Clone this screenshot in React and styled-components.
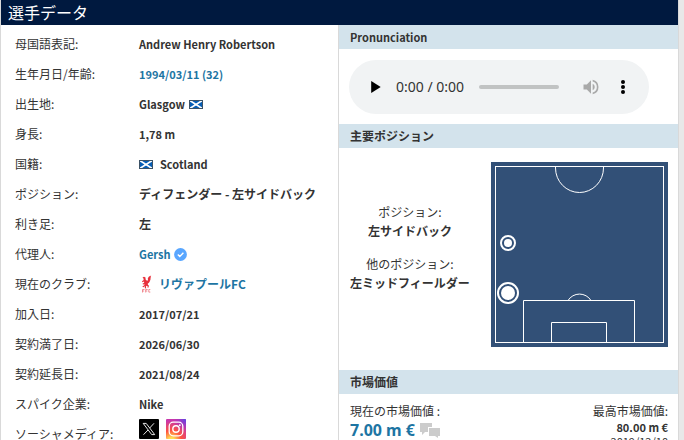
import React from "react";
import styled, { createGlobalStyle, css } from "styled-components";

const GlobalStyle = createGlobalStyle`
  *, *::before, *::after { box-sizing: border-box; }
  body {
    margin: 0;
    background: #e8e8e8;
    color: #333;
    font: 12px/18px "Noto Sans CJK JP", sans-serif;
  }
  h2, h3, p, dl, dd, dt { margin: 0; }
  a { color: #1d75a3; text-decoration: none; }
`;

const Page = styled.div`
  height: 100vh;
  overflow: hidden;
  padding-right: 5px;
`;

const Card = styled.section`
  background: #fff;
  border: solid #d9d9d9;
  border-width: 0 1px;
  min-height: 100%;
`;

const CardTitle = styled.h2`
  height: 25px;
  padding-left: 7px;
  background: #00193f;
  color: #fff;
  font-size: 16px;
  font-weight: 400;
  line-height: 24px;
`;

const Columns = styled.div`
  display: grid;
  grid-template-columns: minmax(0, 337fr) minmax(0, 340fr);
`;

const Facts = styled.dl`
  padding: 4px 0 0 14px;
`;

const Fact = styled.div`
  display: grid;
  grid-template-columns: 124px 1fr;
  align-items: center;
  height: 30px;
  white-space: nowrap;
`;

const FactValue = styled.dd`
  display: flex;
  align-items: center;
  align-self: ${(p) => (p.$top ? "start" : "center")};
  gap: ${(p) => p.$gap || 4}px;
  font-size: ${(p) => (p.$latin ? 11 : 12)}px;
  font-weight: 700;
`;

const Side = styled.div`
  border-left: 1px solid #d9d9d9;
  min-width: 0;
`;

const BoxTitle = styled.h3`
  height: 24px;
  padding-left: 11px;
  background: #d3e3ec;
  font-size: ${(p) => (p.$latin ? 11 : 12)}px;
  font-weight: 700;
  line-height: 24px;
`;

const Player = styled.div`
  display: flex;
  align-items: center;
  width: 300px;
  max-width: 100%;
  height: 54px;
  margin: 11px 10px 10px;
  padding: 0 10px;
  border-radius: 27px;
  background: #f1f3f4;
`;

const PlayerButton = styled.button`
  display: flex;
  align-items: center;
  justify-content: center;
  width: 32px;
  height: 32px;
  padding: 0;
  border: 0;
  background: none;
  color: #000;
  &:disabled { color: #a9a9a9; }
`;

const Time = styled.span`
  margin: 0 15px 0 5px;
  font: 14px/20px "Noto Sans", sans-serif;
  white-space: nowrap;
`;

const Seek = styled.input`
  appearance: none;
  flex: 1;
  min-width: 0;
  height: 4px;
  margin: 0 16px 0 0;
  border-radius: 2px;
  background: #c1c3c3;
  &::-webkit-slider-thumb { appearance: none; width: 0; height: 0; }
`;

const Positions = styled.div`
  display: flex;
  align-items: center;
  justify-content: space-between;
  height: 222px;
  padding: 0 10px 9px 11px;
`;

const PositionNames = styled.dl`
  display: grid;
  gap: 14px;
  padding-bottom: 16px;
  text-align: center;
`;

const PositionName = styled.div`
  line-height: 19px;
  dd { font-weight: 700; }
`;

const Value = styled.div`
  display: flex;
  justify-content: space-between;
  padding: 8px 10px 0 11px;
`;

const ValueBlock = styled.div`
  ${(p) => p.$end && css`
    text-align: right;
    line-height: 14px;
    font-size: 11px;
    strong { display: block; }
  `}
`;

const ValueLabel = styled.p`
  font-size: 12px;
  line-height: 18px;
`;

const CurrentValue = styled.a`
  display: flex;
  align-items: center;
  gap: 5px;
  font: 700 16px/20px "Noto Sans", sans-serif;
`;

const Icon = styled.svg`
  display: block;
  flex: none;
`;

const Flag = () => (
  <Icon width="14" height="9" viewBox="0 0 14 9" role="img" aria-label="Scotland">
    <rect width="14" height="9" fill="#075eb5" />
    <path d="M0 0 14 9M14 0 0 9" stroke="#fff" strokeWidth="1.7" />
    <rect x=".5" y=".5" width="13" height="8" fill="none" stroke="#3c5266" />
  </Icon>
);

const Verified = () => (
  <Icon width="13" height="13" viewBox="0 0 13 13">
    <circle cx="6.5" cy="6.5" r="6.4" fill="#58a6ff" />
    <path d="m3.8 6.5 2 2 3.6-3.8" fill="none" stroke="#fff" strokeWidth="1.4" />
  </Icon>
);

const Crest = () => (
  <Icon width="16" height="18" viewBox="0 0 16 18" fill="#e8303c">
    <path d="M3.5 2.6 5 1.8 6.5 2.6 6.6 4.5 8 5.8 9 5.2 8.8 3.3 10 1.6 12.2 .6 11.4 2.5 12 2.6 11.2 4.2 11.7 4.5 10.6 6.2 10.9 6.6 9.7 8 8.8 8.5 8.9 9.8 10 10.8 9.3 12.8 8.4 12.6 8.7 11.3 7.5 10.7 6.9 11.6 7.2 13.4 5.8 13.3 5.9 11.3 4.2 12.2 3.3 11.4 5.3 10.3 5.6 9.2 4 9.5 3.5 8.7 5.2 7.7 5 6.4 3.4 7.2 3 6.3 4.7 5.1 4.5 3.5z" />
    <path d="M3.5 17.5V14.5h2m-2 1.5h1.6M6.7 17.5v-3h2m-2 1.5h1.6m3-1.5H9.8v2.6h1.5" fill="none" stroke="#ee737c" strokeWidth=".8" />
  </Icon>
);

const XLogo = () => (
  <Icon width="20" height="20" viewBox="0 0 20 20">
    <rect width="20" height="20" rx="1" />
    <path d="M4.2 4.4h3l8.500 11.200h-3zM15 4.300l-4.400 4.800M9 11l-4.500 4.700" fill="none" stroke="#fff" strokeWidth=".9" />
  </Icon>
);

const InstagramLogo = () => (
  <Icon width="20" height="20" viewBox="0 0 20 20">
    <defs>
      <radialGradient id="warm" cx=".27" cy="1.08" r="1">
        <stop offset="0" stopColor="#fd5" />
        <stop offset=".15" stopColor="#fd5" />
        <stop offset=".5" stopColor="#ff543e" />
        <stop offset="1" stopColor="#c837ab" />
      </radialGradient>
      <radialGradient id="cool" cx="1" cy="0" r=".65">
        <stop offset="0" stopColor="#5148e8" />
        <stop offset="1" stopColor="#a52dc5" stopOpacity="0" />
      </radialGradient>
    </defs>
    <rect width="20" height="20" rx="1" fill="url(#warm)" />
    <rect width="20" height="20" rx="1" fill="url(#cool)" />
    <rect x="3.2" y="3.2" width="13.6" height="13.6" rx="4" fill="none" stroke="#fff" strokeWidth="1.3" />
    <circle cx="10" cy="10" r="3.2" fill="none" stroke="#fff" strokeWidth="1.4" />
    <circle cx="13.8" cy="6.2" r=".9" fill="#fff" />
  </Icon>
);

const PlayIcon = () => (
  <Icon width="24" height="24" viewBox="0 0 24 24" fill="currentColor">
    <path d="M8.2 6v12l9.5-6z" />
  </Icon>
);

const VolumeIcon = () => (
  <Icon width="20" height="20" viewBox="0 0 24 24" fill="currentColor">
    <path d="M3 9v6h4l5 5V4L7 9H3zm13.5 3A4.5 4.5 0 0 0 14 7.97v8.05A4.5 4.5 0 0 0 16.5 12zM14 3.23v2.06a7 7 0 0 1 0 13.42v2.06a9 9 0 0 0 0-17.54z" />
  </Icon>
);

const MoreIcon = () => (
  <Icon width="20" height="20" viewBox="0 0 20 20" fill="currentColor">
    <circle cx="10" cy="5" r="2" />
    <circle cx="10" cy="10" r="2" />
    <circle cx="10" cy="15" r="2" />
  </Icon>
);

const ChatIcon = () => (
  <Icon width="20" height="15" viewBox="0 0 20 15" fill="#ccc">
    <path d="M0 0h12v4H8v5H5l-3 3V9H0z" />
    <path d="M9 5h11v8h-2v2l-3-2H9z" />
  </Icon>
);

const Pitch = () => (
  <Icon width="177" height="185" viewBox="0 0 177 185" fill="none" stroke="#fff" role="img" aria-label="主要ポジション">
    <rect width="177" height="185" fill="#325077" stroke="none" />
    <rect x="4.5" y="4.5" width="168" height="176" />
    <path d="M64.5 4.5v1.5a24 24.5 0 0 0 48 0V4.5" />
    <path d="M32.5 180.5v-42h111v42M60.5 180.5v-20h55v20M77 138.5a13.5 13.5 0 0 1 23 0" />
    <circle cx="17" cy="81" r="7" strokeWidth="2" fill="#325077" />
    <circle cx="17" cy="81" r="4" fill="#fff" stroke="none" />
    <circle cx="17" cy="131" r="10" strokeWidth="2" fill="#325077" />
    <circle cx="17" cy="131" r="7" fill="#fff" stroke="none" />
  </Icon>
);

const facts = [
  { label: "母国語表記:", value: "Andrew Henry Robertson", latin: true },
  { label: "生年月日/年齢:", value: <a href="#birthday">1994/03/11 (32)</a>, latin: true },
  { label: "出生地:", value: <>Glasgow <Flag /></>, latin: true },
  { label: "身長:", value: "1,78 m", latin: true },
  { label: "国籍:", value: <><Flag /> Scotland</>, latin: true, gap: 7 },
  { label: "ポジション:", value: "ディフェンダー - 左サイドバック" },
  { label: "利き足:", value: "左" },
  { label: "代理人:", value: <><a href="#agent">Gersh</a><Verified /></>, latin: true },
  { label: "現在のクラブ:", value: <><Crest /><a href="#club">リヴァプールFC</a></> },
  { label: "加入日:", value: "2017/07/21", latin: true },
  { label: "契約満了日:", value: "2026/06/30", latin: true },
  { label: "契約延長日:", value: "2021/08/24", latin: true },
  { label: "スパイク企業:", value: "Nike", latin: true },
  {
    label: "ソーシャメディア:",
    value: (
      <>
        <a href="#x" aria-label="X"><XLogo /></a>
        <a href="#instagram" aria-label="Instagram"><InstagramLogo /></a>
      </>
    ),
    gap: 7,
    top: true,
  },
];

export default function App() {
  return (
    <Page>
      <GlobalStyle />
      <Card>
        <CardTitle>選手データ</CardTitle>
        <Columns>
          <Facts>
            {facts.map(({ label, value, gap, latin, top }) => (
              <Fact key={label}>
                <dt>{label}</dt>
                <FactValue $gap={gap} $latin={latin} $top={top}>{value}</FactValue>
              </Fact>
            ))}
          </Facts>
          <Side>
            <BoxTitle $latin>Pronunciation</BoxTitle>
            <Player>
              <PlayerButton type="button" aria-label="Play"><PlayIcon /></PlayerButton>
              <Time>0:00 / 0:00</Time>
              <Seek type="range" min="0" max="100" defaultValue="0" aria-label="Seek" />
              <PlayerButton type="button" aria-label="Mute" disabled><VolumeIcon /></PlayerButton>
              <PlayerButton type="button" aria-label="More"><MoreIcon /></PlayerButton>
            </Player>
            <BoxTitle>主要ポジション</BoxTitle>
            <Positions>
              <PositionNames>
                <PositionName><dt>ポジション:</dt><dd>左サイドバック</dd></PositionName>
                <PositionName><dt>他のポジション:</dt><dd>左ミッドフィールダー</dd></PositionName>
              </PositionNames>
              <Pitch />
            </Positions>
            <BoxTitle>市場価値</BoxTitle>
            <Value>
              <ValueBlock>
                <ValueLabel>現在の市場価値 :</ValueLabel>
                <CurrentValue href="#value">7.00 m €<ChatIcon /></CurrentValue>
              </ValueBlock>
              <ValueBlock $end>
                <ValueLabel>最高市場価値:</ValueLabel>
                <strong>80.00 m €</strong>
                <span>2019/12/10</span>
              </ValueBlock>
            </Value>
          </Side>
        </Columns>
      </Card>
    </Page>
  );
}
